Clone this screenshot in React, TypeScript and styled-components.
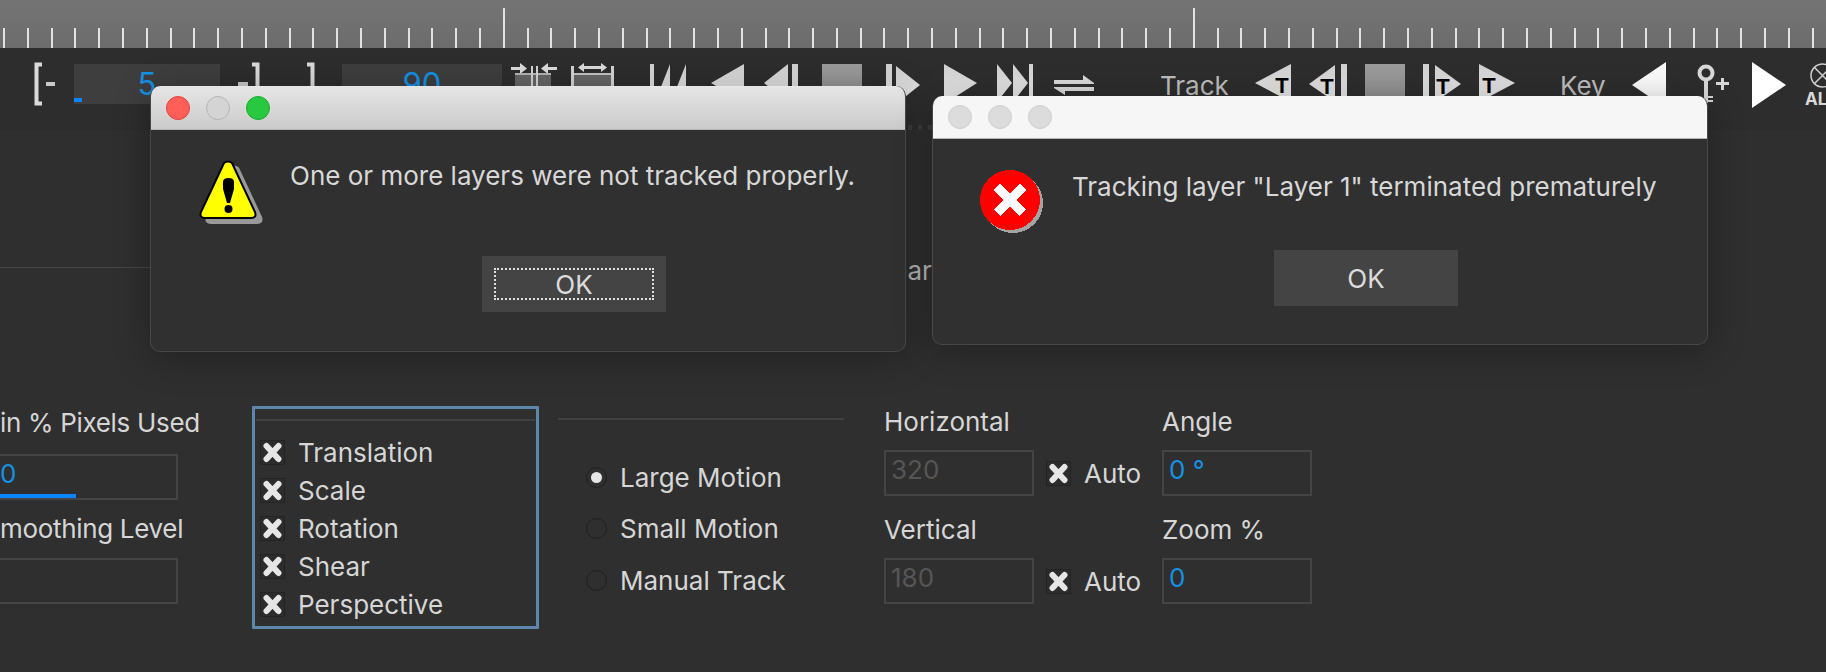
import styled, { createGlobalStyle } from 'styled-components'

const GlobalStyle = createGlobalStyle`
  html, body {
    margin: 0;
    padding: 0;
    background: #2f2f2f;
  }
  * {
    box-sizing: border-box;
  }
`

const TICK_COUNT = 77
const MAJOR_TICKS = [21, 50]
const WARNING_SHAPE = 'M25 3Q29 0 33 3L56 52Q58 58 52 58H6Q0 58 2 52Z'

const App = () => {
  return (
    <Page>
      <GlobalStyle />
      <Ruler>
        {Array.from({ length: TICK_COUNT }, (_, i) => (
          <TickCell key={i}>
            <Tick $major={MAJOR_TICKS.includes(i)} />
          </TickCell>
        ))}
      </Ruler>

      <Toolbar>
        <ToolIcon $gap={0} width="21" height="48" viewBox="0 0 21 48">
          <path d="M8 2.5H2.5V41.5H8" fill="none" stroke="#dadada" strokeWidth="4" />
          <rect x="12" y="20" width="9" height="4" fill="#c8c8c8" />
        </ToolIcon>
        <SpinField $gap={19} $width={146}>
          5
          <Handle />
        </SpinField>
        <ToolIcon $gap={18} width="22" height="48" viewBox="0 0 22 48">
          <path d="M14 2.5H19.5V41.5H14" fill="none" stroke="#dadada" strokeWidth="4" />
          <rect x="0" y="20" width="10" height="4" fill="#c8c8c8" />
        </ToolIcon>
        <ToolIcon $gap={47} width="8" height="48" viewBox="0 0 8 48">
          <path d="M0 2.5H5.5V41.5H0" fill="none" stroke="#dadada" strokeWidth="4" />
        </ToolIcon>
        <SpinField $gap={27} $width={160}>90</SpinField>
        <ToolIcon $gap={9} width="46" height="48" viewBox="0 0 46 48">
          <path d="M0 5H9V1L16 6.5L9 12V8H0ZM46 5H37V1L30 6.5L37 12V8H46Z" fill="#dcdcdc" />
          <rect x="4" y="11" width="36" height="37" fill="#666" />
          <rect x="4" y="11" width="36" height="2" fill="#b5b5b5" />
          <rect x="20" y="4" width="2" height="44" fill="#d5d5d5" />
          <rect x="25" y="4" width="2" height="44" fill="#d5d5d5" />
        </ToolIcon>
        <ToolIcon $gap={14} width="43" height="48" viewBox="0 0 43 48">
          <path d="M7 5.5L13 1V4H30V1L36 5.5L30 10V7H13V10Z" fill="#dcdcdc" />
          <rect x="3" y="11" width="37" height="37" fill="#666" />
          <rect x="0" y="4" width="3" height="44" fill="#d5d5d5" />
          <rect x="40" y="4" width="3" height="44" fill="#d5d5d5" />
          <rect x="3" y="11" width="37" height="2" fill="#c5c5c5" />
        </ToolIcon>
        <ToolIcon $gap={36} width="36" height="48" viewBox="0 0 36 48">
          <rect x="0" y="2" width="4" height="38" className="shade" />
          <path d="M20 2V40H5ZM36 2V40H21Z" className="shade" />
        </ToolIcon>
        <ToolIcon $gap={25} width="33" height="48" viewBox="0 0 33 48">
          <path d="M33 2V40L0 21Z" className="shade" />
        </ToolIcon>
        <ToolIcon $gap={20} width="34" height="48" viewBox="0 0 34 48">
          <path d="M24 2V40L0 21Z" className="shade" />
          <rect x="28" y="2" width="6" height="38" className="shade" />
        </ToolIcon>
        <ToolStop $gap={24} />
        <ToolIcon $gap={24} width="34" height="48" viewBox="0 0 34 48">
          <rect x="0" y="2" width="6" height="38" className="shade" />
          <path d="M10 4V42L34 23Z" className="shade" />
        </ToolIcon>
        <ToolIcon $gap={24} width="33" height="48" viewBox="0 0 33 48">
          <path d="M0 2V42L33 21Z" className="shade" />
        </ToolIcon>
        <ToolIcon $gap={20} width="36" height="48" viewBox="0 0 36 48">
          <path d="M0 2V40L15 21ZM16 2V40L31 21Z" className="shade" />
          <rect x="32" y="2" width="4" height="38" className="shade" />
        </ToolIcon>
        <ToolIcon $gap={21} width="40" height="48" viewBox="0 0 40 48">
          <path d="M0 18H29V13L40 21V22H0ZM40 25V29H11V33L0 26V25Z" fill="#d8d8d8" />
        </ToolIcon>
        <ToolLabel $gap={66} $width={67}>Track</ToolLabel>
        <ToolIcon $gap={28} width="36" height="48" viewBox="0 0 36 48">
          <path d="M36 2V40L0 21Z" className="shade" />
          <TrackMark x="27" y="31">T</TrackMark>
        </ToolIcon>
        <ToolIcon $gap={18} width="38" height="48" viewBox="0 0 38 48">
          <path d="M26 3V40L0 22Z" className="shade" />
          <rect x="32" y="2" width="6" height="38" className="shade" />
          <TrackMark x="18" y="32">T</TrackMark>
        </ToolIcon>
        <ToolStop $gap={18} />
        <ToolIcon $gap={18} width="38" height="48" viewBox="0 0 38 48">
          <rect x="0" y="2" width="6" height="38" className="shade" />
          <path d="M12 3V40L38 22Z" className="shade" />
          <TrackMark x="20" y="32">T</TrackMark>
        </ToolIcon>
        <ToolIcon $gap={18} width="36" height="48" viewBox="0 0 36 48">
          <path d="M0 2V40L36 21Z" className="shade" />
          <TrackMark x="10" y="31">T</TrackMark>
        </ToolIcon>
        <ToolLabel $gap={45} $width={45}>Key</ToolLabel>
        <ToolIcon $gap={27} width="34" height="48" viewBox="0 0 34 48">
          <path d="M34 0V46L0 23Z" fill="#fbfbfb" />
        </ToolIcon>
        <ToolIcon $gap={30} width="34" height="48" viewBox="0 0 34 48">
          <circle cx="10" cy="11" r="6.5" fill="none" stroke="#d8d8d8" strokeWidth="4" />
          <path d="M8 18H12V41H8ZM12 34H17V36H12ZM12 38H17V40H12Z" fill="#d8d8d8" />
          <path d="M25 16H28V20H33V23H28V28H25V23H20V20H25Z" fill="#d8d8d8" />
        </ToolIcon>
        <ToolIcon $gap={22} width="34" height="48" viewBox="0 0 34 48">
          <path d="M0 0V46L34 23Z" fill="#fff" />
        </ToolIcon>
        <AllButton>
          <svg width="25" height="25" viewBox="0 0 25 25">
            <circle cx="12.5" cy="12.5" r="11.5" fill="none" stroke="#d0d0d0" strokeWidth="1.5" />
            <path d="M4.5 4.5L20.5 20.5M20.5 4.5L4.5 20.5" stroke="#d0d0d0" strokeWidth="1.5" />
          </svg>
          <AllText>AL</AllText>
        </AllButton>
      </Toolbar>

      <FaintMarks>
        <FaintMark />
        <FaintMark />
        <FaintMark />
      </FaintMarks>

      <ClearRow>
        <RowLine />
        <ClearLabel>ear</ClearLabel>
      </ClearRow>

      <Panel>
        <LevelColumn>
          <LevelLabel $bottom={15}>in % Pixels Used</LevelLabel>
          <LevelField>
            <Value $color="#1492e6">0</Value>
            <Progress />
          </LevelField>
          <LevelLabel $top={13} $bottom={13}>moothing Level</LevelLabel>
          <LevelField />
        </LevelColumn>

        <MotionBox>
          <BoxRule />
          <CheckList>
            {['Translation', 'Scale', 'Rotation', 'Shear', 'Perspective'].map(name => (
              <CheckRow key={name}>
                <CheckMark />
                <span>{name}</span>
              </CheckRow>
            ))}
          </CheckList>
        </MotionBox>

        <ModeColumn>
          <ModeRule />
          <RadioList>
            <RadioRow>
              <Radio $selected />
              <span>Large Motion</span>
            </RadioRow>
            <RadioRow>
              <Radio />
              <span>Small Motion</span>
            </RadioRow>
            <RadioRow>
              <Radio />
              <span>Manual Track</span>
            </RadioRow>
          </RadioList>
        </ModeColumn>

        <SizeGrid>
          <GridLabel>Horizontal</GridLabel>
          <span />
          <GridLabel>Angle</GridLabel>
          <NumberField>
            <Value $color="#565656">320</Value>
          </NumberField>
          <AutoCheck>
            <CheckMark />
            <span>Auto</span>
          </AutoCheck>
          <NumberField>
            <Value $color="#1492e6">0 °</Value>
          </NumberField>
          <GridLabel>Vertical</GridLabel>
          <span />
          <GridLabel>Zoom %</GridLabel>
          <NumberField>
            <Value $color="#565656">180</Value>
          </NumberField>
          <AutoCheck>
            <CheckMark />
            <span>Auto</span>
          </AutoCheck>
          <NumberField>
            <Value $color="#1492e6">0</Value>
          </NumberField>
        </SizeGrid>
      </Panel>

      <Dialog $x={150} $y={86} $w={756} $h={266}>
        <TitleBar $height={44} $active>
          <Light $color="#ff5f57" $edge="#e0443e" />
          <Light $color="#d4d4d4" $edge="#b5b5b5" />
          <Light $color="#28c840" $edge="#1aab29" />
        </TitleBar>
        <DialogBody $left={49} $top={30} $rowHeight={96} $gap={27}>
          <svg width="64" height="64" viewBox="0 0 64 64">
            <path d={WARNING_SHAPE} transform="translate(6 5)" fill="#999" stroke="#999" strokeWidth="2" />
            <path d={WARNING_SHAPE} fill="#ff0" stroke="#000" strokeWidth="2" />
            <path d="M24 22Q24 18 29.5 18Q35 18 35 22L35 29L31 43H28L24 29Z" fill="#000" />
            <circle cx="29.5" cy="49" r="4" fill="#000" />
          </svg>
          <Message $offset={0}>One or more layers were not tracked properly.</Message>
        </DialogBody>
        <OkButton $left={332} $focused>
          <OkFocus $focused>OK</OkFocus>
        </OkButton>
      </Dialog>

      <Dialog $x={932} $y={96} $w={776} $h={249}>
        <TitleBar $height={43}>
          <Light $color="#dcdcdc" $edge="#cfcfcf" />
          <Light $color="#dcdcdc" $edge="#cfcfcf" />
          <Light $color="#dcdcdc" $edge="#cfcfcf" />
        </TitleBar>
        <DialogBody $left={48} $top={31} $rowHeight={80} $gap={28}>
          <svg width="64" height="64" viewBox="0 0 64 64" shapeRendering="crispEdges">
            <circle cx="33" cy="33" r="30" fill="#a3a3a3" />
            <circle cx="30" cy="30" r="30" fill="#f00" />
            <path d="M17 17L43 43M43 17L17 43" stroke="#fff" strokeWidth="9" />
          </svg>
          <Message $offset={1}>Tracking layer "Layer 1" terminated prematurely</Message>
        </DialogBody>
        <OkButton $left={342}>
          <OkFocus>OK</OkFocus>
        </OkButton>
      </Dialog>

      <HiddenDefs aria-hidden="true">
        <defs>
          <linearGradient id="tool-shade" x1="0" y1="0" x2="0" y2="1">
            <stop offset="0" stopColor="#cfcfcf" />
            <stop offset="1" stopColor="#ececec" />
          </linearGradient>
        </defs>
      </HiddenDefs>
    </Page>
  )
}

const CheckMark = () => (
  <CheckBox>
    <svg width="19" height="21" viewBox="0 0 19 21">
      <path d="M3.5 4L15.5 17M15.5 4L3.5 17" stroke="#e6e6e6" strokeWidth="6" strokeLinecap="round" />
    </svg>
  </CheckBox>
)

const Page = styled.div`
  position: relative;
  display: flex;
  flex-direction: column;
  width: 1826px;
  height: 672px;
  overflow: hidden;
  background: #2f2f2f;
  color: #d6d6d6;
  font-family: Inter, 'Liberation Sans', sans-serif;
  font-size: 26px;
`

const Ruler = styled.div`
  display: flex;
  flex: 0 0 48px;
  align-items: flex-end;
  padding-left: 3px;
  background: linear-gradient(#747474, #6c6c6c);
`

const TickCell = styled.div`
  display: flex;
  flex: 0 0 23.8px;
  align-items: flex-end;
`

const Tick = styled.div<{ $major?: boolean }>`
  width: 2px;
  height: ${p => (p.$major ? 40 : 20)}px;
  background: #e2e2e2;
`

const Toolbar = styled.div`
  display: flex;
  flex: 0 0 82px;
  align-items: flex-start;
  padding: 14px 0 0 34px;
  background: #2d2d2d;
`

const ToolIcon = styled.svg<{ $gap: number }>`
  flex: none;
  margin-left: ${p => p.$gap}px;

  .shade {
    fill: url(#tool-shade);
  }
`

const ToolStop = styled.div<{ $gap: number }>`
  flex: none;
  width: 40px;
  height: 46px;
  margin: 2px 0 0 ${p => p.$gap}px;
  background: linear-gradient(#9c9c9c, #8a8a8a);
`

const ToolLabel = styled.div<{ $gap: number; $width: number }>`
  flex: none;
  width: ${p => p.$width}px;
  margin: 8px 0 0 ${p => p.$gap}px;
  color: #bdbdbd;
  line-height: 32px;
  white-space: nowrap;
`

const TrackMark = styled.text`
  fill: #000;
  font-family: 'Liberation Sans', sans-serif;
  font-size: 22px;
  font-weight: 700;
  text-anchor: middle;
`

const SpinField = styled.div<{ $gap: number; $width: number }>`
  position: relative;
  flex: none;
  width: ${p => p.$width}px;
  height: 40px;
  margin: 2px 0 0 ${p => p.$gap}px;
  background: #3e3e3e;
  color: #1492e6;
  font-size: 31px;
  line-height: 40px;
  text-align: center;
`

const Handle = styled.div`
  position: absolute;
  left: 0;
  bottom: 2px;
  width: 8px;
  height: 4px;
  background: #0a84ff;
`

const AllButton = styled.div`
  display: flex;
  flex: none;
  flex-direction: column;
  gap: 2px;
  margin: 1px 0 0 19px;
  padding-left: 5px;
`

const AllText = styled.div`
  margin-left: -5px;
  color: #d8d8d8;
  font-size: 17px;
  font-weight: 700;
  line-height: 19px;
`

const FaintMarks = styled.div`
  position: absolute;
  top: 125px;
  left: 908px;
  display: flex;
  gap: 6px;
`

const FaintMark = styled.div`
  width: 4px;
  height: 5px;
  background: #3d3d3d;
`

const ClearRow = styled.div`
  display: flex;
  flex: 0 0 276px;
  align-items: flex-start;
  gap: 4px;
  padding-top: 137px;
`

const RowLine = styled.div`
  width: 888px;
  height: 1px;
  background: #464646;
`

const ClearLabel = styled.div`
  margin-top: -12px;
  color: #b8b8b8;
  line-height: 32px;
`

const Panel = styled.div`
  position: absolute;
  top: 406px;
  left: 0;
  display: flex;
  align-items: flex-start;
`

const LevelColumn = styled.div`
  display: flex;
  flex: 0 0 252px;
  flex-direction: column;
  padding-top: 1px;
`

const LevelLabel = styled.div<{ $top?: number; $bottom?: number }>`
  height: 32px;
  margin: ${p => p.$top ?? 0}px 0 ${p => p.$bottom ?? 0}px 0;
  letter-spacing: -0.32px;
  line-height: 32px;
  white-space: nowrap;
`

const NumberField = styled.div`
  position: relative;
  width: 150px;
  height: 46px;
  padding-left: 5px;
  border: 2px solid #444;
`

const LevelField = styled(NumberField)`
  width: 185px;
  margin-left: -7px;
`

const Value = styled.div<{ $color: string }>`
  color: ${p => p.$color};
  font-size: 26px;
  line-height: 36px;
`

const Progress = styled.div`
  position: absolute;
  left: 0;
  bottom: 0;
  width: 81px;
  height: 4px;
  background: #0a84ff;
`

const MotionBox = styled.div`
  flex: none;
  width: 287px;
  height: 223px;
  padding: 10px 1px 0;
  border: 3px solid #5c86aa;
  border-radius: 1px;
`

const BoxRule = styled.div`
  height: 2px;
  background: #414141;
`

const CheckList = styled.div`
  display: flex;
  flex-direction: column;
  gap: 6px;
  padding: 15px 0 0 4px;
`

const CheckRow = styled.div`
  display: flex;
  align-items: center;
  gap: 13px;
  height: 32px;
  white-space: nowrap;
`

const CheckBox = styled.div`
  display: flex;
  flex: none;
  align-items: center;
  justify-content: center;
  width: 25px;
  height: 25px;
  border: 1px solid #232323;
  background: #2c2c2c;
`

const ModeColumn = styled.div`
  flex: none;
  width: 286px;
  margin-left: 19px;
  padding-top: 12px;
`

const ModeRule = styled.div`
  height: 2px;
  background: #414141;
`

const RadioList = styled.div`
  display: flex;
  flex-direction: column;
  gap: 19.5px;
  padding: 41px 0 0 28px;
`

const RadioRow = styled.div`
  display: flex;
  align-items: center;
  gap: 13px;
  height: 32px;
  white-space: nowrap;
`

const Radio = styled.div<{ $selected?: boolean }>`
  display: flex;
  flex: none;
  align-items: center;
  justify-content: center;
  width: 21px;
  height: 21px;
  border: 1px solid #1e1e1e;
  border-radius: 50%;

  &::after {
    content: '';
    width: 11px;
    height: 11px;
    border-radius: 50%;
    background: ${p => (p.$selected ? '#e6e6e6' : 'transparent')};
  }
`

const SizeGrid = styled.div`
  display: grid;
  flex: none;
  grid-template-columns: 150px 128px 150px;
  grid-template-rows: 44px 46px 62px 46px;
  margin-left: 40px;
`

const GridLabel = styled.div`
  align-self: end;
  margin-bottom: 12px;
  line-height: 32px;
  white-space: nowrap;
`

const AutoCheck = styled.div`
  display: flex;
  align-items: center;
  gap: 13px;
  height: 46px;
  margin-left: 12px;
`

const Dialog = styled.div<{ $x: number; $y: number; $w: number; $h: number }>`
  position: absolute;
  left: ${p => p.$x}px;
  top: ${p => p.$y}px;
  width: ${p => p.$w}px;
  height: ${p => p.$h}px;
  overflow: hidden;
  border: 1px solid #474747;
  border-top: none;
  border-radius: 10px;
  background: #303030;
  box-shadow: 0 6px 36px rgba(0, 0, 0, 0.3);
`

const TitleBar = styled.div<{ $height: number; $active?: boolean }>`
  display: flex;
  align-items: center;
  gap: 16px;
  height: ${p => p.$height}px;
  padding-left: 15px;
  border-bottom: 1px solid #b5b5b5;
  background: ${p => (p.$active ? 'linear-gradient(#e6e6e6, #cbcbcb)' : '#f6f6f6')};
`

const Light = styled.div<{ $color: string; $edge: string }>`
  width: 24px;
  height: 24px;
  border: 1px solid ${p => p.$edge};
  border-radius: 50%;
  background: ${p => p.$color};
`

const DialogBody = styled.div<{ $left: number; $top: number; $rowHeight: number; $gap: number }>`
  display: flex;
  align-items: flex-start;
  gap: ${p => p.$gap}px;
  height: ${p => p.$rowHeight}px;
  margin-top: ${p => p.$top}px;
  padding-left: ${p => p.$left - 1}px;
`

const Message = styled.div<{ $offset: number }>`
  padding-top: ${p => p.$offset}px;
  color: #d8d8d8;
  line-height: 32px;
  white-space: nowrap;
`

const OkButton = styled.div<{ $left: number; $focused?: boolean }>`
  display: flex;
  width: 184px;
  height: 56px;
  margin-left: ${p => p.$left - 1}px;
  padding: ${p => (p.$focused ? '12px' : '0')};
  background: #444;
`

const OkFocus = styled.div<{ $focused?: boolean }>`
  flex: 1;
  display: flex;
  align-items: center;
  justify-content: center;
  border: ${p => (p.$focused ? '2px dotted #e0e0e0' : 'none')};
  color: #dcdcdc;
`

const HiddenDefs = styled.svg`
  position: absolute;
  width: 0;
  height: 0;
`

export default App
